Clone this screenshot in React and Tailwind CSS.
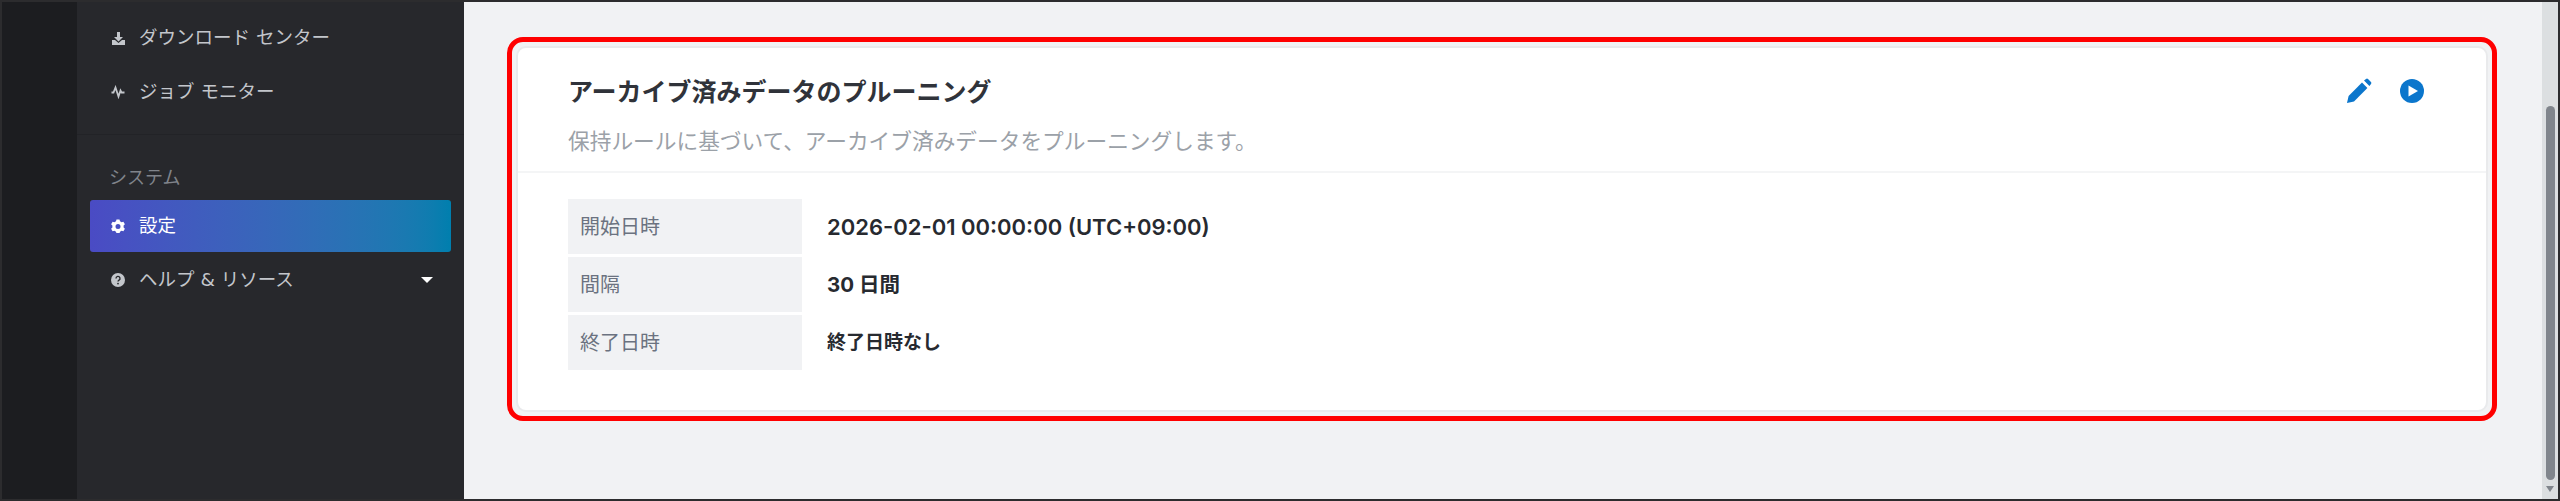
const FONT = "font-['DejaVu_Sans','Noto_Sans_CJK_JP',sans-serif]";

function Download() {
  return (
    <svg width="15" height="15" viewBox="0 0 15 15" fill="currentColor">
      <path d="M6 1h3v5h3L7.5 10.5 3 6h3z" />
      <path d="M1 9h3l3.5 3L11 9h3v5H1z" />
    </svg>
  );
}
function Wave() {
  return (
    <svg width="14" height="14" viewBox="0 0 14 14" fill="none" stroke="currentColor" strokeWidth="1.8">
      <path d="M0.5 7.5H2.5L4.5 2.5L7.5 11.5L9.5 5.5L10.5 7.5H13.5" />
    </svg>
  );
}
function Gear() {
  return (
    <svg width="14" height="14" viewBox="0 0 14 14" fill="currentColor" fillRule="evenodd">
      <path d="M5.5 0.5h3l.5 1.8 1.6.9 1.8-.5 1.5 2.6-1.3 1.3v1.8l1.3 1.3-1.5 2.6-1.8-.5-1.6.9-.5 1.8h-3L5 12.7l-1.6-.9-1.8.5L.1 9.7l1.3-1.3V6.6L.1 5.3l1.5-2.6 1.8.5L5 2.3zM7 5a2.5 2.5 0 1 0 0 5 2.5 2.5 0 0 0 0-5z" />
    </svg>
  );
}
function Help() {
  return (
    <svg width="14" height="14" viewBox="0 0 14 14">
      <circle cx="7" cy="7" r="7" fill="currentColor" />
      <path d="M5 5.4a2 2 0 1 1 3 1.7c-.7.4-1 .7-1 1.4" fill="none" stroke="#27282c" strokeWidth="1.4" />
      <circle cx="7" cy="10.6" r="0.9" fill="#27282c" />
    </svg>
  );
}
function Pencil() {
  return (
    <svg width="26" height="26" viewBox="0 0 26 26" fill="#0b76cc">
      <path d="M1 25l1.6-7L16 4.6l5.4 5.4L8 23.4z" />
      <path d="M18 2.6l2-1.6a1.6 1.6 0 0 1 2 0l3 3a1.6 1.6 0 0 1 0 2l-1.6 2z" />
    </svg>
  );
}
function Play() {
  return (
    <svg width="24" height="24" viewBox="0 0 24 24">
      <circle cx="12" cy="12" r="12" fill="#0b76cc" />
      <path d="M8.5 6.5L18 12l-9.5 5.5z" fill="#fff" />
    </svg>
  );
}

function NavItem({ icon, label, active, caret, className = "" }) {
  return (
    <div
      className={`mx-[13px] h-[52px] flex items-center pl-[20px] pr-[18px] rounded-[3px] ${
        active ? "bg-gradient-to-r from-[#4a4bc4] to-[#007fae] text-white" : "text-[#c3c6cb]"
      } ${className}`}
    >
      <span className="w-[16px] flex justify-center shrink-0">{icon}</span>
      <span className="ml-[13px] pt-[1px] text-[18.5px] leading-none">{label}</span>
      {caret && (
        <span className="ml-auto w-0 h-0 border-x-[6px] border-x-transparent border-t-[6px] border-t-white" />
      )}
    </div>
  );
}

function Row({ label, value, valueClass }) {
  return (
    <div className="flex h-[55px]">
      <div className="w-[234px] bg-[#f1f2f4] flex items-center pl-[12px] pt-[1px] text-[20px] text-[#6b7280]">{label}</div>
      <div className={`flex items-center pl-[25px] pt-[1px] text-[#272a30] font-['Inter','Noto_Sans_CJK_JP',sans-serif] ${valueClass}`}>{value}</div>
    </div>
  );
}

export default function App() {
  return (
    <div className={`w-[2560px] h-[501px] flex overflow-hidden border-2 border-[#2c2c2e] ${FONT}`}>
      <div className="w-[75px] bg-[#1c1d20] shrink-0" />
      <nav className="w-[387px] bg-[#27282c] shrink-0 flex flex-col">
        <div className="pt-[10px] flex flex-col gap-[2px] border-b border-[#222327] pb-[16px]">
          <NavItem icon={<Download />} label="ダウンロード センター" />
          <NavItem icon={<Wave />} label="ジョブ モニター" />
        </div>
        <div className="pl-[32px] mt-[31px] mb-[10px] h-[24px] flex items-center text-[18px] text-[#80848b] leading-none">
          システム
        </div>
        <NavItem icon={<Gear />} label="設定" active />
        <NavItem icon={<Help />} label="ヘルプ & リソース" caret className="mt-[2px]" />
      </nav>
      <main className="flex-1 bg-[#f1f2f4] flex min-w-0">
        <div className="flex-1 pl-[43px] pr-[45px] pt-[35px] min-w-0">
          <div className="h-[384px] border-[5px] border-[#ff0000] rounded-[16px] p-[4px]">
            <div className="h-full bg-white border-2 border-[#e9eaec] rounded-[10px]">
              <div className="h-[125px] border-b-2 border-[#f4f5f6] pl-[50px] pr-[62px] relative">
                <h2 className="pt-[27px] text-[25px] leading-[36px] font-bold text-[#30333a]">
                  アーカイブ済みデータのプルーニング
                </h2>
                <p className="mt-[16px] text-[21.7px] leading-[30px] text-[#9ba1a8]">
                  保持ルールに基づいて、アーカイブ済みデータをプルーニングします。
                </p>
                <div className="absolute right-[62px] top-[30px] flex items-center gap-[28px]">
                  <Pencil />
                  <Play />
                </div>
              </div>
              <div className="pt-[26px] pl-[50px] flex flex-col gap-[3px]">
                <Row label="開始日時" value="2026-02-01 00:00:00 (UTC+09:00)" valueClass="text-[22px] font-semibold" />
                <Row label="間隔" value="30 日間" valueClass="text-[20.5px] font-bold" />
                <Row label="終了日時" value="終了日時なし" valueClass="text-[19px] font-bold" />
              </div>
            </div>
          </div>
        </div>
        <div className="w-[16px] bg-[#dcdfe1] shrink-0 flex flex-col items-center">
          <div className="mt-[104px] w-[9px] h-[374px] rounded-full bg-[#80858c]" />
          <div className="mt-[6px] w-0 h-0 border-x-[4px] border-x-transparent border-t-[6px] border-t-[#80858c]" />
        </div>
      </main>
    </div>
  );
}
